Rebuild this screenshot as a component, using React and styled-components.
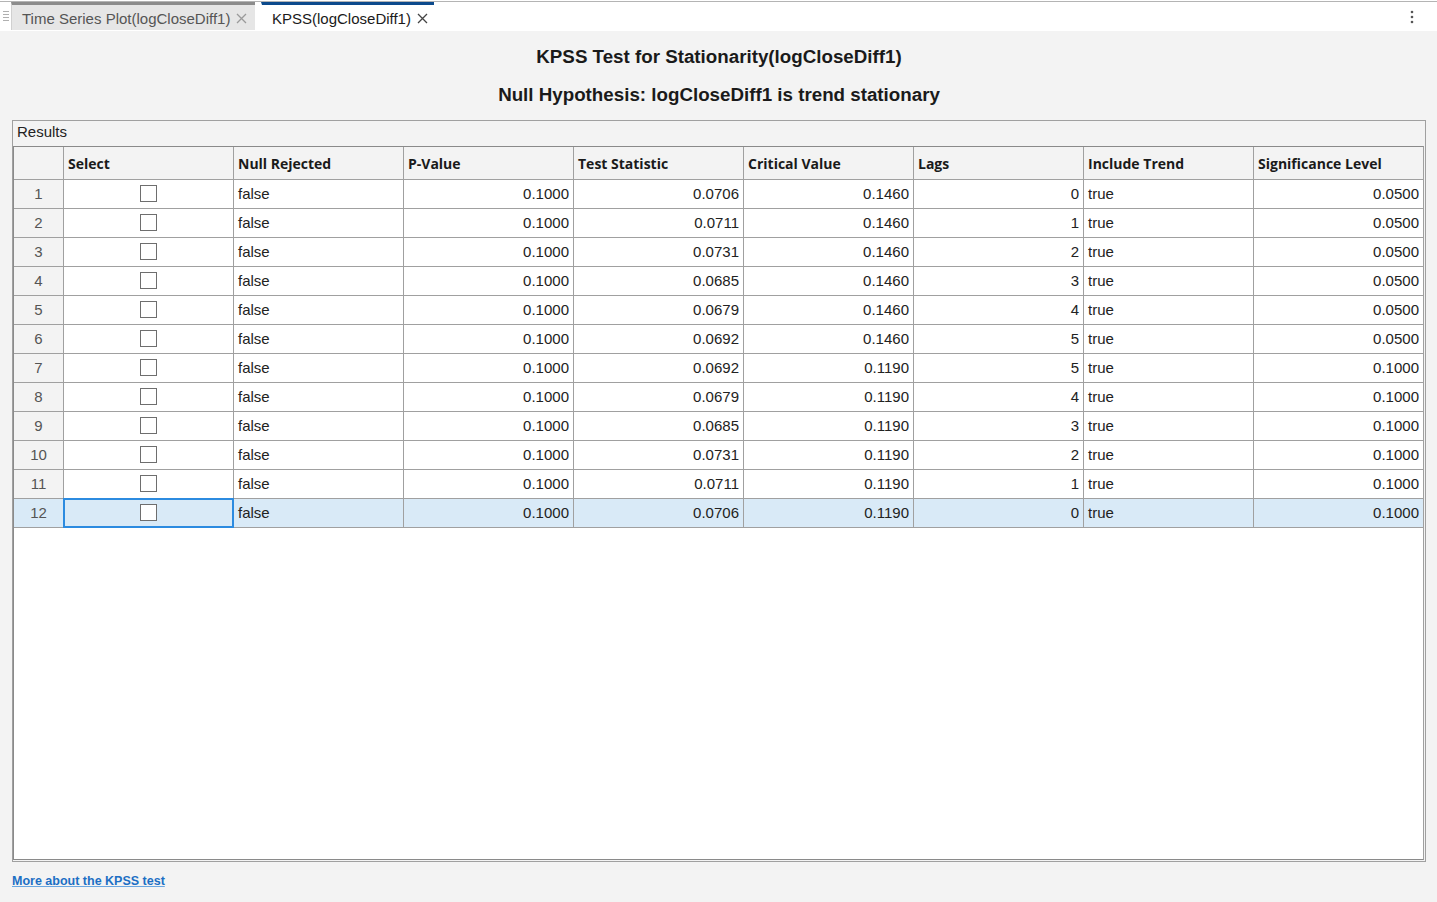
import React from 'react'
import styled, { createGlobalStyle } from 'styled-components'

const GlobalStyle = createGlobalStyle`
  html, body {
    margin: 0;
    padding: 0;
    background: #f3f3f3;
    font-family: 'Liberation Sans', Arial, sans-serif;
    color: #212121;
  }
`

const Page = styled.div`
  width: 1437px;
  height: 902px;
  display: flex;
  flex-direction: column;
  overflow: hidden;
`

const TabStrip = styled.div`
  background: #fff;
  padding-top: 1px;
`

const TabBar = styled.div`
  height: 28px;
  border-top: 1px solid #b4b4b4;
  display: flex;
  align-items: stretch;
  padding-bottom: 1px;
`

const Grip = styled.div`
  width: 11px;
  display: flex;
  align-items: center;
  justify-content: center;
  padding-left: 1px;
  box-sizing: border-box;
`

const Tab = styled.div`
  box-sizing: border-box;
  width: ${(p) => p.$width}px;
  margin-left: ${(p) => p.$gap}px;
  border-top: 3px solid ${(p) => (p.$active ? '#0c4a8c' : '#8c8c8c')};
  border-left: 1px solid ${(p) => (p.$active ? '#fff' : '#d0d0d0')};
  background: ${(p) => (p.$active ? '#fff' : '#e6e6e6')};
  color: ${(p) => (p.$active ? '#1a1a1a' : '#555')};
  font-size: 15px;
  display: flex;
  align-items: center;
  padding: 2px 0 0 10px;
  gap: 6px;
  white-space: nowrap;
`

const Spacer = styled.div`
  flex: 1;
`

const MoreButton = styled.div`
  width: 50px;
  display: flex;
  align-items: center;
  justify-content: center;
  padding: 2px 0 0 0;
`

const Content = styled.div`
  flex: 1;
  display: flex;
  flex-direction: column;
  padding: 0 11px 0 12px;
`

const Title = styled.h1`
  margin: ${(p) => p.$top}px 0 0;
  font-size: 18.75px;
  line-height: 24px;
  font-weight: bold;
  text-align: center;
  color: #1a1a1a;
`

const Panel = styled.div`
  margin-top: 13px;
  height: 742px;
  box-sizing: border-box;
  border: 1px solid #a0a0a0;
  display: flex;
  flex-direction: column;
  padding: 0 1px 1px 0;
`

const PanelLabel = styled.div`
  height: 25px;
  line-height: 22px;
  padding-left: 4px;
  font-size: 15px;
  color: #222;
`

const Table = styled.div`
  flex: 1;
  background: #fff;
  border: 1px solid #8a8a8a;
  border-right-color: #a0a0a0;
  overflow: hidden;
`

const Row = styled.div`
  display: grid;
  grid-template-columns: 49px repeat(8, 169px);
  column-gap: 1px;
  background: #a0a0a0;
  border-bottom: 1px solid #a0a0a0;
  height: ${(p) => p.$height}px;
`

const HeadCell = styled.div`
  background: #f3f3f3;
  font-family: 'Open Sans', 'Noto Sans', sans-serif;
  font-weight: 700;
  font-size: 14px;
  color: #1a1a1a;
  display: flex;
  align-items: center;
  padding: 1px 4px 0;
`

const Cell = styled.div`
  background: ${(p) => (p.$selected ? '#d9eaf7' : p.$index ? '#f3f3f3' : '#fff')};
  font-size: 15px;
  color: ${(p) => (p.$index ? '#555' : '#222')};
  display: flex;
  align-items: center;
  justify-content: ${(p) => p.$align || 'flex-start'};
  padding: 0 ${(p) => (p.$index ? 0 : 4)}px 2px;
  box-shadow: ${(p) => (p.$focused ? 'inset 0 0 0 2px #2c8be0' : 'none')};
  margin: ${(p) => (p.$focused ? '-1px' : '0')};
`

const Checkbox = styled.span`
  display: inline-block;
  width: 15px;
  height: 15px;
  background: #fff;
  border: 1px solid #6e6e6e;
  margin-right: ${(p) => (p.$focused ? 0 : 1)}px;
`

const Footer = styled.div`
  height: 38px;
  display: flex;
  align-items: center;
`

const Link = styled.a`
  font-size: 12.5px;
  font-weight: bold;
  color: #1c6fc4;
  text-decoration: underline;
  text-decoration-color: #6aa6e0;
  cursor: pointer;
`

const CloseIcon = ({ color }) => (
  <svg width="11" height="11" viewBox="0 0 11 11">
    <path d="M1 1L10 10M10 1L1 10" stroke={color} strokeWidth="1.3" />
  </svg>
)

const GripIcon = () => (
  <svg width="6" height="12" viewBox="0 0 6 12">
    <rect x="0" y="1" width="6" height="1" fill="#b0b0b0" />
    <rect x="0" y="4" width="6" height="1" fill="#b0b0b0" />
    <rect x="0" y="7" width="6" height="1" fill="#b0b0b0" />
    <rect x="0" y="10" width="6" height="1" fill="#b0b0b0" />
  </svg>
)

const MoreIcon = () => (
  <svg width="4" height="14" viewBox="0 0 4 14">
    <circle cx="2" cy="2" r="1.3" fill="#555" />
    <circle cx="2" cy="7" r="1.3" fill="#555" />
    <circle cx="2" cy="12" r="1.3" fill="#555" />
  </svg>
)

const headers = [
  '',
  'Select',
  'Null Rejected',
  'P-Value',
  'Test Statistic',
  'Critical Value',
  'Lags',
  'Include Trend',
  'Significance Level',
]

const rows = [
  ['0.0706', '0.1460', 0, '0.0500'],
  ['0.0711', '0.1460', 1, '0.0500'],
  ['0.0731', '0.1460', 2, '0.0500'],
  ['0.0685', '0.1460', 3, '0.0500'],
  ['0.0679', '0.1460', 4, '0.0500'],
  ['0.0692', '0.1460', 5, '0.0500'],
  ['0.0692', '0.1190', 5, '0.1000'],
  ['0.0679', '0.1190', 4, '0.1000'],
  ['0.0685', '0.1190', 3, '0.1000'],
  ['0.0731', '0.1190', 2, '0.1000'],
  ['0.0711', '0.1190', 1, '0.1000'],
  ['0.0706', '0.1190', 0, '0.1000'],
]

export default function App() {
  return (
    <Page>
      <GlobalStyle />
      <TabStrip>
        <TabBar>
          <Grip>
            <GripIcon />
          </Grip>
          <Tab $width={244} $gap={0}>
            Time Series Plot(logCloseDiff1)
            <CloseIcon color="#9a9a9a" />
          </Tab>
          <Tab $width={173} $gap={6} $active>
            KPSS(logCloseDiff1)
            <CloseIcon color="#444" />
          </Tab>
          <Spacer />
          <MoreButton>
            <MoreIcon />
          </MoreButton>
        </TabBar>
      </TabStrip>
      <Content>
        <Title $top={14}>KPSS Test for Stationarity(logCloseDiff1)</Title>
        <Title $top={14}>Null Hypothesis: logCloseDiff1 is trend stationary</Title>
        <Panel>
          <PanelLabel>Results</PanelLabel>
          <Table>
            <Row $height={32}>
              {headers.map((h, i) => (
                <HeadCell key={i}>{h}</HeadCell>
              ))}
            </Row>
            {rows.map((r, i) => {
              const sel = i === rows.length - 1
              return (
                <Row key={i} $height={28}>
                  <Cell $index $align="center" $selected={sel}>
                    {i + 1}
                  </Cell>
                  <Cell $align="center" $selected={sel} $focused={sel}>
                    <Checkbox $focused={sel} />
                  </Cell>
                  <Cell $selected={sel}>false</Cell>
                  <Cell $align="flex-end" $selected={sel}>0.1000</Cell>
                  <Cell $align="flex-end" $selected={sel}>{r[0]}</Cell>
                  <Cell $align="flex-end" $selected={sel}>{r[1]}</Cell>
                  <Cell $align="flex-end" $selected={sel}>{r[2]}</Cell>
                  <Cell $selected={sel}>true</Cell>
                  <Cell $align="flex-end" $selected={sel}>{r[3]}</Cell>
                </Row>
              )
            })}
          </Table>
        </Panel>
        <Footer>
          <Link>More about the KPSS test</Link>
        </Footer>
      </Content>
    </Page>
  )
}
